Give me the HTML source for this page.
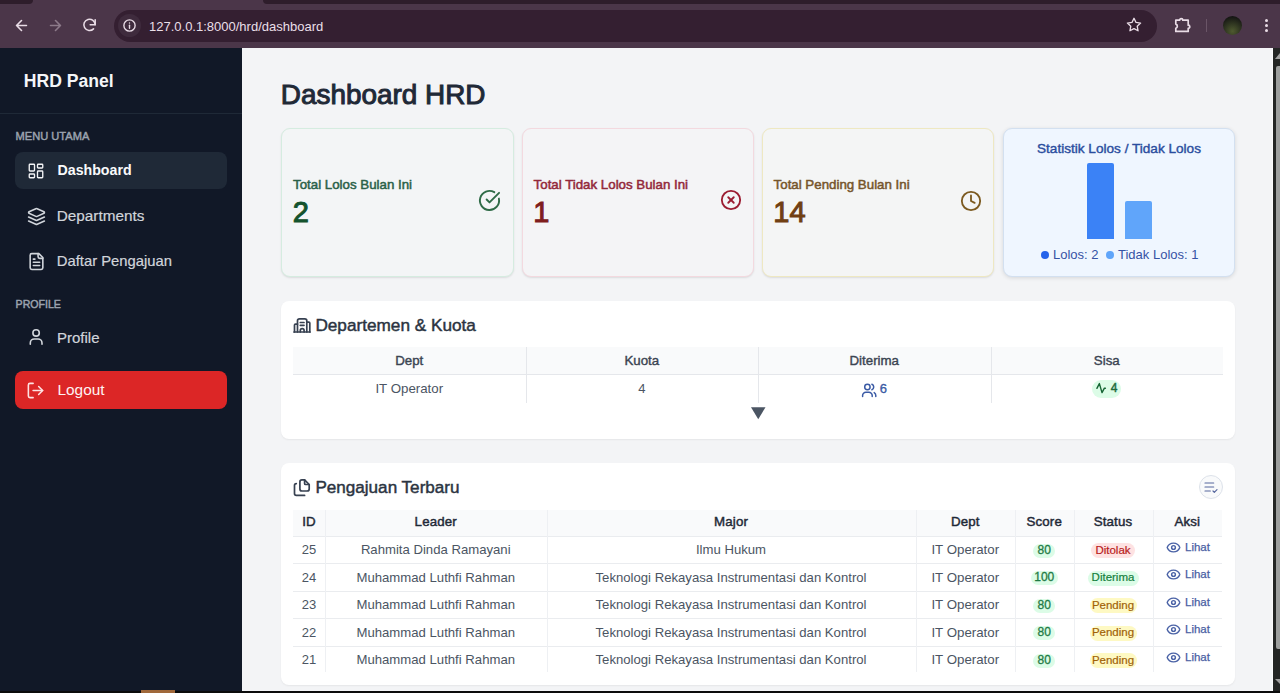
<!DOCTYPE html>
<html><head><meta charset="utf-8">
<style>
*{box-sizing:border-box;margin:0;padding:0}
html,body{width:1280px;height:693px;overflow:hidden;background:#000;font-family:"Liberation Sans",sans-serif;position:relative}
.abs{position:absolute}
.t{position:absolute;white-space:nowrap;line-height:1}
svg.abs{overflow:visible}
</style></head><body>
<div class="abs" style="left:0px;top:0px;width:1280px;height:48px;background:#4b3649"></div>
<div class="abs" style="left:0px;top:0px;width:33px;height:4px;background:#2e1d2b;border-bottom-right-radius:5px"></div>
<div class="abs" style="left:263px;top:0px;width:1017px;height:4px;background:#2e1d2b;border-bottom-left-radius:5px"></div>
<div class="abs" style="left:114px;top:9.5px;width:1043px;height:32px;border-radius:16px;background:#341f31"></div>
<div class="abs" style="left:118px;top:14px;width:23px;height:23px;border-radius:50%;background:#3f2b3d"></div>
<svg class="abs" style="left:13px;top:17px;" width="17" height="17" viewBox="0 0 24 24" fill="none" stroke="#e9dce6" stroke-width="2.3" stroke-linecap="round" stroke-linejoin="round"><path d="M19 12H5M12 19l-7-7 7-7"/></svg>
<svg class="abs" style="left:47px;top:17px;" width="17" height="17" viewBox="0 0 24 24" fill="none" stroke="#8c7a89" stroke-width="2.3" stroke-linecap="round" stroke-linejoin="round"><path d="M5 12h14M12 5l7 7-7 7"/></svg>
<svg class="abs" style="left:81px;top:17px;" width="17" height="17" viewBox="0 0 24 24" fill="none" stroke="#e9dce6" stroke-width="2.2" stroke-linecap="round" stroke-linejoin="round"><path d="M20 11a8 8 0 1 0-2.3 5.7"/><path d="M20 4v7h-7"/></svg>
<svg class="abs" style="left:122px;top:18px;" width="15" height="15" viewBox="0 0 24 24" fill="none" stroke="#e9dce6" stroke-width="2.2" stroke-linecap="round" stroke-linejoin="round"><circle cx="12" cy="12" r="9"/><path d="M12 16.5v-5"/><circle cx="12" cy="8" r="1.1" fill="#e9dce6" stroke="none"/></svg>
<div class="t" style="left:149px;top:19.50px;font-size:13px;color:#eadfe8;">127.0.0.1:8000/hrd/dashboard</div>
<svg class="abs" style="left:1125px;top:16px;" width="18" height="18" viewBox="0 0 24 24" fill="none" stroke="#e9dce6" stroke-width="1.8" stroke-linecap="round" stroke-linejoin="round"><path d="M12 3l2.7 5.6 6.1.8-4.5 4.2 1.1 6.1L12 16.8 6.6 19.7l1.1-6.1L3.2 9.4l6.1-.8z"/></svg>
<svg class="abs" style="left:1173px;top:16px;" width="19" height="19" viewBox="0 0 19 19" fill="none" stroke="#e9dce6" stroke-width="1.7" stroke-linecap="round" stroke-linejoin="round"><path d="M2.8 4.2H6.6A1.6 1.6 0 0 1 9.8 4.2H15.2V9.2A1.6 1.6 0 0 1 15.2 12.4V15.4H2.8V12.3A2.2 2.2 0 0 0 2.8 8.1Z"/></svg>
<div class="abs" style="left:1206px;top:19px;width:1px;height:13px;background:#6a5567"></div>
<div class="abs" style="left:1223px;top:15.5px;width:19px;height:19px;border-radius:50%;background:radial-gradient(circle at 50% 80%,#4f5a30 0,#2e3420 45%,#121212 85%)"></div>
<div class="abs" style="left:1264.9px;top:18.7px;width:3px;height:3px;border-radius:50%;background:#e9dce6"></div>
<div class="abs" style="left:1264.9px;top:23.9px;width:3px;height:3px;border-radius:50%;background:#e9dce6"></div>
<div class="abs" style="left:1264.9px;top:29.1px;width:3px;height:3px;border-radius:50%;background:#e9dce6"></div>
<div class="abs" style="left:0px;top:48px;width:242px;height:643px;background:#111827"></div>
<div class="t" style="left:23.8px;top:73.40px;font-size:17.6px;color:#f5f6f8;font-weight:700;">HRD Panel</div>
<div class="abs" style="left:0px;top:113px;width:242px;height:1px;background:#1f2937"></div>
<div class="t" style="left:15.6px;top:130.60px;font-size:11.1px;color:#9ca3af;-webkit-text-stroke:0.45px #9ca3af;">MENU UTAMA</div>
<div class="abs" style="left:15px;top:152px;width:212px;height:37px;border-radius:8px;background:#1f2937"></div>
<svg class="abs" style="left:27px;top:161.5px;" width="18" height="18" viewBox="0 0 24 24" fill="none" stroke="#f3f4f6" stroke-width="1.8" stroke-linecap="round" stroke-linejoin="round"><rect x="3" y="3" width="7" height="9" rx="1"/><rect x="14" y="3" width="7" height="5" rx="1"/><rect x="14" y="12" width="7" height="9" rx="1"/><rect x="3" y="16" width="7" height="5" rx="1"/></svg>
<div class="t" style="left:57.5px;top:162.98px;font-size:14.2px;color:#f9fafb;font-weight:700;">Dashboard</div>
<svg class="abs" style="left:27px;top:207px;" width="19" height="19" viewBox="0 0 24 24" fill="none" stroke="#d1d5db" stroke-width="2" stroke-linecap="round" stroke-linejoin="round"><path d="m12.83 2.18a2 2 0 0 0-1.66 0L2.6 6.08a1 1 0 0 0 0 1.83l8.58 3.91a2 2 0 0 0 1.66 0l8.58-3.9a1 1 0 0 0 0-1.83Z"/><path d="m22 17.65-9.17 4.16a2 2 0 0 1-1.66 0L2 17.65"/><path d="m22 12.65-9.17 4.16a2 2 0 0 1-1.66 0L2 12.65"/></svg>
<div class="t" style="left:56.8px;top:207.75px;font-size:15.3px;color:#d1d5db;-webkit-text-stroke:0.2px #d1d5db;">Departments</div>
<svg class="abs" style="left:27px;top:252px;" width="19" height="19" viewBox="0 0 24 24" fill="none" stroke="#d1d5db" stroke-width="2" stroke-linecap="round" stroke-linejoin="round"><path d="M15 2H6a2 2 0 0 0-2 2v16a2 2 0 0 0 2 2h12a2 2 0 0 0 2-2V7Z"/><path d="M14 2v4a2 2 0 0 0 2 2h4"/><path d="M10 9H8"/><path d="M16 13H8"/><path d="M16 17H8"/></svg>
<div class="t" style="left:56.8px;top:253.67px;font-size:14.8px;color:#d1d5db;-webkit-text-stroke:0.2px #d1d5db;">Daftar Pengajuan</div>
<div class="t" style="left:15.6px;top:298.53px;font-size:10.6px;color:#9ca3af;-webkit-text-stroke:0.45px #9ca3af;">PROFILE</div>
<svg class="abs" style="left:27px;top:327px;" width="19" height="19" viewBox="0 0 19 19" fill="none" stroke="#d1d5db" stroke-width="1.6" stroke-linecap="round" stroke-linejoin="round"><circle cx="9.1" cy="5.9" r="3.2"/><path d="M3.3 17.3V16a4 4 0 0 1 4-4h3.7a4 4 0 0 1 4 4v1.3"/></svg>
<div class="t" style="left:57px;top:329.80px;font-size:15px;color:#d1d5db;-webkit-text-stroke:0.2px #d1d5db;">Profile</div>
<div class="abs" style="left:15px;top:371px;width:212px;height:38px;border-radius:8px;background:#dc2626"></div>
<svg class="abs" style="left:26px;top:381px;" width="19" height="19" viewBox="0 0 24 24" fill="none" stroke="#fee2e2" stroke-width="2" stroke-linecap="round" stroke-linejoin="round"><path d="M9 21H5a2 2 0 0 1-2-2V5a2 2 0 0 1 2-2h4"/><polyline points="16 17 21 12 16 7"/><line x1="21" x2="9" y1="12" y2="12"/></svg>
<div class="t" style="left:57.5px;top:382.46px;font-size:15.4px;color:#fef2f2;">Logout</div>
<div class="abs" style="left:242px;top:48px;width:1031px;height:643px;background:#f3f4f6"></div>
<div class="t" style="left:280.8px;top:81.08px;font-size:27.9px;color:#1f2937;-webkit-text-stroke:1px #1f2937;">Dashboard HRD</div>
<div class="abs" style="left:281px;top:128px;width:232.6px;height:149px;border-radius:9px;border:1.8px solid #d5ece0;background:#f3f5f6;box-shadow:0 1px 2px rgba(0,0,0,.10)"></div>
<div class="t" style="left:293px;top:177.94px;font-size:13.3px;color:#2a6148;-webkit-text-stroke:0.5px #2a6148;">Total Lolos Bulan Ini</div>
<div class="t" style="left:292.7px;top:197.75px;font-size:29px;color:#14532d;-webkit-text-stroke:1px #14532d;">2</div>
<div class="abs" style="left:521.6px;top:128px;width:232.6px;height:149px;border-radius:9px;border:1.8px solid #f3d9df;background:#f4f4f6;box-shadow:0 1px 2px rgba(0,0,0,.10)"></div>
<div class="t" style="left:533.6px;top:177.94px;font-size:13.3px;color:#93283a;-webkit-text-stroke:0.5px #93283a;">Total Tidak Lolos Bulan Ini</div>
<div class="t" style="left:533.3000000000001px;top:197.75px;font-size:29px;color:#7f1d1d;-webkit-text-stroke:1px #7f1d1d;">1</div>
<div class="abs" style="left:761.6px;top:128px;width:232.6px;height:149px;border-radius:9px;border:1.8px solid #eee8c2;background:#f4f5f5;box-shadow:0 1px 2px rgba(0,0,0,.10)"></div>
<div class="t" style="left:773.6px;top:177.94px;font-size:13.3px;color:#76552b;-webkit-text-stroke:0.5px #76552b;">Total Pending Bulan Ini</div>
<div class="t" style="left:773.3000000000001px;top:197.75px;font-size:29px;color:#713f12;-webkit-text-stroke:1px #713f12;">14</div>
<svg class="abs" style="left:478px;top:189px;" width="23" height="23" viewBox="0 0 24 24" fill="none" stroke="#2f6b47" stroke-width="2" stroke-linecap="round" stroke-linejoin="round"><path d="M21.801 10A10 10 0 1 1 17 3.335"/><path d="m9 11 3 3L22 4"/></svg>
<svg class="abs" style="left:720px;top:189.3px;" width="22" height="22" viewBox="0 0 24 24" fill="none" stroke="#9b1c31" stroke-width="2" stroke-linecap="round" stroke-linejoin="round"><circle cx="12" cy="12" r="10"/><path d="m15 9-6 6"/><path d="m9 9 6 6"/></svg>
<svg class="abs" style="left:960.4px;top:189.5px;" width="22" height="22" viewBox="0 0 24 24" fill="none" stroke="#7c5a20" stroke-width="2" stroke-linecap="round" stroke-linejoin="round"><circle cx="12" cy="12" r="10"/><polyline points="12 6 12 12 16 14"/></svg>
<div class="abs" style="left:1003px;top:128px;width:232px;height:149px;border-radius:9px;border:1px solid #d3e0f0;background:#eff6ff;box-shadow:0 1px 4px rgba(0,0,0,.12)"></div>
<div class="t" style="left:1037px;top:141.69px;font-size:13.6px;color:#2a4d9e;-webkit-text-stroke:0.4px #2a4d9e;">Statistik Lolos / Tidak Lolos</div>
<div class="abs" style="left:1087px;top:163px;width:27px;height:76px;background:#3b82f6;border-radius:2px 2px 0 0"></div>
<div class="abs" style="left:1125px;top:201px;width:27px;height:38px;background:#60a5fa;border-radius:2px 2px 0 0"></div>
<div class="abs" style="left:1041px;top:251px;width:8px;height:8px;border-radius:50%;background:#2563eb"></div>
<div class="t" style="left:1053px;top:248.30px;font-size:13px;color:#3552a4;">Lolos: 2</div>
<div class="abs" style="left:1106px;top:251px;width:7.5px;height:8px;border-radius:50%;background:#60a5fa"></div>
<div class="t" style="left:1118px;top:248.30px;font-size:13px;color:#3552a4;">Tidak Lolos: 1</div>
<div class="abs" style="left:281px;top:300.5px;width:954px;height:138px;border-radius:8px;background:#fff;box-shadow:0 1px 2px rgba(0,0,0,.06)"></div>
<svg class="abs" style="left:288px;top:312px;" width="28" height="28" viewBox="0 0 28 28" fill="none" stroke="#374151" stroke-width="1.7" stroke-linecap="round" stroke-linejoin="round"><path d="M6.5 20V13.1a1 1 0 0 1 1-1H9.5"/><path d="M9.5 20V8.8a2 2 0 0 1 2-2h5.3a2 2 0 0 1 2 2V20"/><path d="M18.8 10.1h2a1 1 0 0 1 1 1V20"/><path d="M6 20H22"/><path d="M12.3 10.5h3.7"/><path d="M12.3 13.3h3.7"/><path d="M12.3 20v-1.5a1.9 1.9 0 0 1 3.8 0V20"/></svg>
<div class="t" style="left:315.4px;top:316.94px;font-size:17.2px;color:#2b3441;-webkit-text-stroke:0.45px #2b3441;">Departemen &amp; Kuota</div>
<div class="abs" style="left:293px;top:347px;width:930px;height:27px;background:#f9fafb"></div>
<div class="abs" style="left:293px;top:374px;width:930px;height:1px;background:#e5e7eb"></div>
<div class="abs" style="left:525.5px;top:347px;width:1px;height:56px;background:#e5e7eb"></div>
<div class="abs" style="left:758px;top:347px;width:1px;height:56px;background:#e5e7eb"></div>
<div class="abs" style="left:990.5px;top:347px;width:1px;height:56px;background:#e5e7eb"></div>
<div class="t" style="left:293px;top:353.74px;font-size:13.3px;color:#3b4452;width:232.5px;text-align:center;-webkit-text-stroke:0.4px #3b4452;">Dept</div>
<div class="t" style="left:525.5px;top:353.74px;font-size:13.3px;color:#3b4452;width:232.5px;text-align:center;-webkit-text-stroke:0.4px #3b4452;">Kuota</div>
<div class="t" style="left:758px;top:353.74px;font-size:13.3px;color:#3b4452;width:232.5px;text-align:center;-webkit-text-stroke:0.4px #3b4452;">Diterima</div>
<div class="t" style="left:990.5px;top:353.74px;font-size:13.3px;color:#3b4452;width:232.5px;text-align:center;-webkit-text-stroke:0.4px #3b4452;">Sisa</div>
<div class="t" style="left:293px;top:382.04px;font-size:13.3px;color:#4b5563;width:232.5px;text-align:center;">IT Operator</div>
<div class="t" style="left:525.5px;top:382.30px;font-size:13px;color:#4b5563;width:232.5px;text-align:center;">4</div>
<svg class="abs" style="left:858px;top:378px;" width="22" height="22" viewBox="0 0 22 22" fill="none" stroke="#3b5ba5" stroke-width="1.5" stroke-linecap="round" stroke-linejoin="round"><circle cx="9.4" cy="9" r="2.7"/><path d="M4.6 18.4v-.9a3.3 3.3 0 0 1 3.3-3.3h3a3.3 3.3 0 0 1 3.3 3.3v.9"/><path d="M13.9 6.3a2.9 2.9 0 0 1 0 5.4"/><path d="M16.2 14.6a3.3 3.3 0 0 1 1.6 2.9v.9"/></svg>
<div class="t" style="left:879.8px;top:381.80px;font-size:13px;color:#3b5ba5;-webkit-text-stroke:0.35px #3b5ba5;">6</div>
<div class="abs" style="left:1092px;top:379.5px;width:29px;height:18px;border-radius:9px;background:#dcfce7"></div>
<svg class="abs" style="left:1094px;top:381px;" width="14" height="14" viewBox="0 0 14 14" fill="none" stroke="#166534" stroke-width="1.4" stroke-linecap="round" stroke-linejoin="round"><path d="M2.9 7.3L5.4 2.6L8 11.6L10.4 7.2H11.4"/></svg>
<div class="t" style="left:1110.8px;top:382.04px;font-size:12px;color:#1f6b3c;-webkit-text-stroke:0.45px #1f6b3c;">4</div>
<svg class="abs" style="left:751px;top:406.5px" width="14.5" height="12.5" viewBox="0 0 14.5 12.5"><path d="M0 0.2H14.5L7.25 12.3Z" fill="#4b5563"/></svg>
<div class="abs" style="left:281px;top:462.5px;width:954px;height:222px;border-radius:8px;background:#fff;box-shadow:0 1px 2px rgba(0,0,0,.06)"></div>
<svg class="abs" style="left:288px;top:473px;" width="28" height="28" viewBox="0 0 28 28" fill="none" stroke="#374151" stroke-width="1.7" stroke-linecap="round" stroke-linejoin="round"><path d="M13.9 6.9h2.7l4.6 4.6v4.5a2 2 0 0 1-2 2h-5.3a2 2 0 0 1-2-2V8.9a2 2 0 0 1 2-2z"/><path d="M16.6 6.9v3.6a1 1 0 0 0 1 1h3.6"/><path d="M8.3 10.6a1.8 1.8 0 0 0-1.8 1.8v8.2a1.8 1.8 0 0 0 1.8 1.8h8.3"/></svg>
<div class="t" style="left:315.4px;top:478.72px;font-size:17.1px;color:#2b3441;-webkit-text-stroke:0.45px #2b3441;">Pengajuan Terbaru</div>
<div class="abs" style="left:1199px;top:475px;width:24px;height:24px;border-radius:50%;border:1px solid #dde2ea;background:#f9fafb"></div>
<svg class="abs" style="left:1203px;top:479px;" width="16" height="16" viewBox="0 0 24 24" fill="none" stroke="#56669e" stroke-width="1.8" stroke-linecap="round" stroke-linejoin="round"><path d="M11 18H3"/><path d="m15 18 2 2 4-4"/><path d="M16 12H3"/><path d="M16 6H3"/></svg>
<div class="abs" style="left:293px;top:509.5px;width:929px;height:26px;background:#f9fafb"></div>
<div class="abs" style="left:293px;top:535.5px;width:929px;height:1px;background:#eaecef"></div>
<div class="abs" style="left:293px;top:563px;width:929px;height:1px;background:#eaecef"></div>
<div class="abs" style="left:293px;top:590.5px;width:929px;height:1px;background:#eaecef"></div>
<div class="abs" style="left:293px;top:618px;width:929px;height:1px;background:#eaecef"></div>
<div class="abs" style="left:293px;top:645.5px;width:929px;height:1px;background:#eaecef"></div>
<div class="abs" style="left:325px;top:509.5px;width:1px;height:162px;background:#eef0f3"></div>
<div class="abs" style="left:546.5px;top:509.5px;width:1px;height:162px;background:#eef0f3"></div>
<div class="abs" style="left:915.5px;top:509.5px;width:1px;height:162px;background:#eef0f3"></div>
<div class="abs" style="left:1015px;top:509.5px;width:1px;height:162px;background:#eef0f3"></div>
<div class="abs" style="left:1073.5px;top:509.5px;width:1px;height:162px;background:#eef0f3"></div>
<div class="abs" style="left:1152.5px;top:509.5px;width:1px;height:162px;background:#eef0f3"></div>
<div class="t" style="left:293px;top:515.24px;font-size:13.3px;color:#1f2937;width:32px;text-align:center;-webkit-text-stroke:0.45px #1f2937;letter-spacing:0.15px;">ID</div>
<div class="t" style="left:325px;top:515.24px;font-size:13.3px;color:#1f2937;width:221.5px;text-align:center;-webkit-text-stroke:0.45px #1f2937;letter-spacing:0.15px;">Leader</div>
<div class="t" style="left:546.5px;top:515.24px;font-size:13.3px;color:#1f2937;width:369.0px;text-align:center;-webkit-text-stroke:0.45px #1f2937;letter-spacing:0.15px;">Major</div>
<div class="t" style="left:915.5px;top:515.24px;font-size:13.3px;color:#1f2937;width:99.5px;text-align:center;-webkit-text-stroke:0.45px #1f2937;letter-spacing:0.15px;">Dept</div>
<div class="t" style="left:1015px;top:515.24px;font-size:13.3px;color:#1f2937;width:58.5px;text-align:center;-webkit-text-stroke:0.45px #1f2937;letter-spacing:0.15px;">Score</div>
<div class="t" style="left:1073.5px;top:515.24px;font-size:13.3px;color:#1f2937;width:79.0px;text-align:center;-webkit-text-stroke:0.45px #1f2937;letter-spacing:0.15px;">Status</div>
<div class="t" style="left:1152.5px;top:515.24px;font-size:13.3px;color:#1f2937;width:69.5px;text-align:center;-webkit-text-stroke:0.45px #1f2937;letter-spacing:0.15px;">Aksi</div>
<div class="t" style="left:293px;top:543.30px;font-size:13px;color:#4b5563;width:32px;text-align:center;">25</div>
<div class="t" style="left:325px;top:543.17px;font-size:13.15px;color:#4b5563;width:221.5px;text-align:center;">Rahmita Dinda Ramayani</div>
<div class="t" style="left:546.5px;top:543.17px;font-size:13.15px;color:#4b5563;width:369.0px;text-align:center;">Ilmu Hukum</div>
<div class="t" style="left:915.5px;top:543.04px;font-size:13.3px;color:#4b5563;width:99.5px;text-align:center;">IT Operator</div>
<div class="abs" style="left:1033.25px;top:543.5px;width:22px;height:14px;border-radius:7px;background:#dcfce7"></div>
<div class="t" style="left:1015px;top:543.94px;font-size:12px;color:#1f7a45;width:58.5px;text-align:center;-webkit-text-stroke:0.3px #1f7a45;">80</div>
<div class="abs" style="left:1091.0px;top:543.0px;width:44px;height:15px;border-radius:8px;background:#fee2e2"></div>
<div class="t" style="left:1073.5px;top:544.57px;font-size:11.5px;color:#b91c1c;width:79.0px;text-align:center;-webkit-text-stroke:0.2px #b91c1c;">Ditolak</div>
<svg class="abs" style="left:1165.7px;top:539.7px;" width="15" height="15" viewBox="0 0 24 24" fill="none" stroke="#4a62a6" stroke-width="2.3" stroke-linecap="round" stroke-linejoin="round"><path d="M2.062 12.348a1 1 0 0 1 0-.696 10.75 10.75 0 0 1 19.876 0 1 1 0 0 1 0 .696 10.75 10.75 0 0 1-19.876 0"/><circle cx="12" cy="12" r="3"/></svg>
<div class="t" style="left:1185px;top:541.57px;font-size:11.5px;color:#4a5ea3;-webkit-text-stroke:0.25px #4a5ea3;">Lihat</div>
<div class="t" style="left:293px;top:570.80px;font-size:13px;color:#4b5563;width:32px;text-align:center;">24</div>
<div class="t" style="left:325px;top:570.67px;font-size:13.15px;color:#4b5563;width:221.5px;text-align:center;">Muhammad Luthfi Rahman</div>
<div class="t" style="left:546.5px;top:570.67px;font-size:13.15px;color:#4b5563;width:369.0px;text-align:center;">Teknologi Rekayasa Instrumentasi dan Kontrol</div>
<div class="t" style="left:915.5px;top:570.54px;font-size:13.3px;color:#4b5563;width:99.5px;text-align:center;">IT Operator</div>
<div class="abs" style="left:1030.75px;top:571px;width:27px;height:14px;border-radius:7px;background:#dcfce7"></div>
<div class="t" style="left:1015px;top:571.44px;font-size:12px;color:#1f7a45;width:58.5px;text-align:center;-webkit-text-stroke:0.3px #1f7a45;">100</div>
<div class="abs" style="left:1087.5px;top:570.5px;width:51px;height:15px;border-radius:8px;background:#dcfce7"></div>
<div class="t" style="left:1073.5px;top:572.07px;font-size:11.5px;color:#15803d;width:79.0px;text-align:center;-webkit-text-stroke:0.2px #15803d;">Diterima</div>
<svg class="abs" style="left:1165.7px;top:567.2px;" width="15" height="15" viewBox="0 0 24 24" fill="none" stroke="#4a62a6" stroke-width="2.3" stroke-linecap="round" stroke-linejoin="round"><path d="M2.062 12.348a1 1 0 0 1 0-.696 10.75 10.75 0 0 1 19.876 0 1 1 0 0 1 0 .696 10.75 10.75 0 0 1-19.876 0"/><circle cx="12" cy="12" r="3"/></svg>
<div class="t" style="left:1185px;top:569.07px;font-size:11.5px;color:#4a5ea3;-webkit-text-stroke:0.25px #4a5ea3;">Lihat</div>
<div class="t" style="left:293px;top:598.30px;font-size:13px;color:#4b5563;width:32px;text-align:center;">23</div>
<div class="t" style="left:325px;top:598.17px;font-size:13.15px;color:#4b5563;width:221.5px;text-align:center;">Muhammad Luthfi Rahman</div>
<div class="t" style="left:546.5px;top:598.17px;font-size:13.15px;color:#4b5563;width:369.0px;text-align:center;">Teknologi Rekayasa Instrumentasi dan Kontrol</div>
<div class="t" style="left:915.5px;top:598.04px;font-size:13.3px;color:#4b5563;width:99.5px;text-align:center;">IT Operator</div>
<div class="abs" style="left:1033.25px;top:598.5px;width:22px;height:14px;border-radius:7px;background:#dcfce7"></div>
<div class="t" style="left:1015px;top:598.94px;font-size:12px;color:#1f7a45;width:58.5px;text-align:center;-webkit-text-stroke:0.3px #1f7a45;">80</div>
<div class="abs" style="left:1089.5px;top:598.0px;width:47px;height:15px;border-radius:8px;background:#fef9c3"></div>
<div class="t" style="left:1073.5px;top:599.57px;font-size:11.5px;color:#a16207;width:79.0px;text-align:center;-webkit-text-stroke:0.2px #a16207;">Pending</div>
<svg class="abs" style="left:1165.7px;top:594.7px;" width="15" height="15" viewBox="0 0 24 24" fill="none" stroke="#4a62a6" stroke-width="2.3" stroke-linecap="round" stroke-linejoin="round"><path d="M2.062 12.348a1 1 0 0 1 0-.696 10.75 10.75 0 0 1 19.876 0 1 1 0 0 1 0 .696 10.75 10.75 0 0 1-19.876 0"/><circle cx="12" cy="12" r="3"/></svg>
<div class="t" style="left:1185px;top:596.57px;font-size:11.5px;color:#4a5ea3;-webkit-text-stroke:0.25px #4a5ea3;">Lihat</div>
<div class="t" style="left:293px;top:625.80px;font-size:13px;color:#4b5563;width:32px;text-align:center;">22</div>
<div class="t" style="left:325px;top:625.67px;font-size:13.15px;color:#4b5563;width:221.5px;text-align:center;">Muhammad Luthfi Rahman</div>
<div class="t" style="left:546.5px;top:625.67px;font-size:13.15px;color:#4b5563;width:369.0px;text-align:center;">Teknologi Rekayasa Instrumentasi dan Kontrol</div>
<div class="t" style="left:915.5px;top:625.54px;font-size:13.3px;color:#4b5563;width:99.5px;text-align:center;">IT Operator</div>
<div class="abs" style="left:1033.25px;top:626px;width:22px;height:14px;border-radius:7px;background:#dcfce7"></div>
<div class="t" style="left:1015px;top:626.44px;font-size:12px;color:#1f7a45;width:58.5px;text-align:center;-webkit-text-stroke:0.3px #1f7a45;">80</div>
<div class="abs" style="left:1089.5px;top:625.5px;width:47px;height:15px;border-radius:8px;background:#fef9c3"></div>
<div class="t" style="left:1073.5px;top:627.07px;font-size:11.5px;color:#a16207;width:79.0px;text-align:center;-webkit-text-stroke:0.2px #a16207;">Pending</div>
<svg class="abs" style="left:1165.7px;top:622.2px;" width="15" height="15" viewBox="0 0 24 24" fill="none" stroke="#4a62a6" stroke-width="2.3" stroke-linecap="round" stroke-linejoin="round"><path d="M2.062 12.348a1 1 0 0 1 0-.696 10.75 10.75 0 0 1 19.876 0 1 1 0 0 1 0 .696 10.75 10.75 0 0 1-19.876 0"/><circle cx="12" cy="12" r="3"/></svg>
<div class="t" style="left:1185px;top:624.07px;font-size:11.5px;color:#4a5ea3;-webkit-text-stroke:0.25px #4a5ea3;">Lihat</div>
<div class="t" style="left:293px;top:653.30px;font-size:13px;color:#4b5563;width:32px;text-align:center;">21</div>
<div class="t" style="left:325px;top:653.17px;font-size:13.15px;color:#4b5563;width:221.5px;text-align:center;">Muhammad Luthfi Rahman</div>
<div class="t" style="left:546.5px;top:653.17px;font-size:13.15px;color:#4b5563;width:369.0px;text-align:center;">Teknologi Rekayasa Instrumentasi dan Kontrol</div>
<div class="t" style="left:915.5px;top:653.04px;font-size:13.3px;color:#4b5563;width:99.5px;text-align:center;">IT Operator</div>
<div class="abs" style="left:1033.25px;top:653.5px;width:22px;height:14px;border-radius:7px;background:#dcfce7"></div>
<div class="t" style="left:1015px;top:653.94px;font-size:12px;color:#1f7a45;width:58.5px;text-align:center;-webkit-text-stroke:0.3px #1f7a45;">80</div>
<div class="abs" style="left:1089.5px;top:653.0px;width:47px;height:15px;border-radius:8px;background:#fef9c3"></div>
<div class="t" style="left:1073.5px;top:654.57px;font-size:11.5px;color:#a16207;width:79.0px;text-align:center;-webkit-text-stroke:0.2px #a16207;">Pending</div>
<svg class="abs" style="left:1165.7px;top:649.7px;" width="15" height="15" viewBox="0 0 24 24" fill="none" stroke="#4a62a6" stroke-width="2.3" stroke-linecap="round" stroke-linejoin="round"><path d="M2.062 12.348a1 1 0 0 1 0-.696 10.75 10.75 0 0 1 19.876 0 1 1 0 0 1 0 .696 10.75 10.75 0 0 1-19.876 0"/><circle cx="12" cy="12" r="3"/></svg>
<div class="t" style="left:1185px;top:651.57px;font-size:11.5px;color:#4a5ea3;-webkit-text-stroke:0.25px #4a5ea3;">Lihat</div>
<div class="abs" style="left:1271.5px;top:48px;width:1.5px;height:643px;background:#fbfbfc"></div>
<div class="abs" style="left:1273px;top:48px;width:7px;height:643px;background:#232524"></div>
<div class="abs" style="left:1276px;top:66px;width:4px;height:583px;background:#9d9f9e;border-radius:2px 0 0 2px"></div>
<svg class="abs" style="left:1275px;top:53px" width="5" height="6"><path d="M5 0V6H0Z" fill="#a0a0a0"/></svg>
<svg class="abs" style="left:1275px;top:679px" width="5" height="5"><path d="M5 5V0H0Z" fill="#a0a0a0"/></svg>
<div class="abs" style="left:0px;top:691px;width:1280px;height:2px;background:#0b0b0b"></div>
<div class="abs" style="left:141px;top:690px;width:34px;height:3px;background:#a0683a"></div>
</body></html>
